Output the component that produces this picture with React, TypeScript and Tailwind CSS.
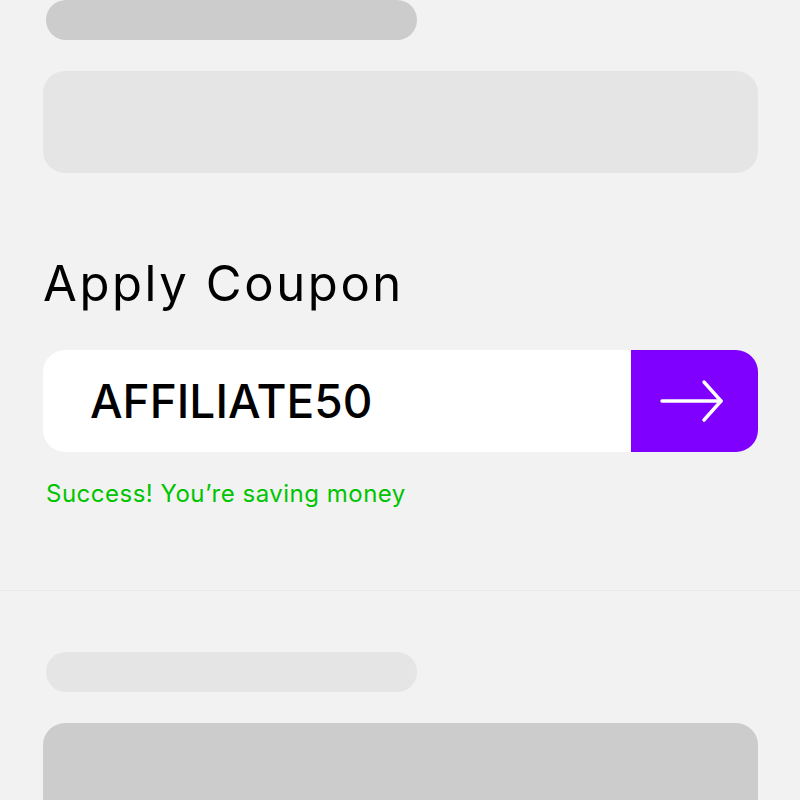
export default function App() {
  return (
    <div className="min-h-screen overflow-hidden bg-[#f2f2f2] font-['Inter',sans-serif]">
      <section className="border-b border-[#e8e8e8] pl-[43px] pr-[42px] pb-[82px]">
        <div className="ml-[3px] h-10 w-[371px] rounded-full bg-[#cccccc]" />
        <div className="mt-[31px] h-[102px] rounded-[22px] bg-[#e5e5e5]" />

        <h2 className="mt-[79px] text-[49px] leading-[64px] font-normal tracking-[2.6px] text-black">
          Apply Coupon
        </h2>

        <div className="mt-[34px] flex h-[102px] overflow-hidden rounded-[22px] bg-white">
          <div className="flex flex-1 items-center pl-[47px] text-[46px] font-medium text-black">
            AFFILIATE50
          </div>
          <button className="flex w-[127px] items-center justify-center bg-[#7f00ff] pr-[5px] text-white">
            <svg width="64" height="44" viewBox="0 0 64 44" fill="none" stroke="currentColor" strokeWidth="3.4" strokeLinecap="round" strokeLinejoin="round">
              <path d="M2 22H61" />
              <path d="M44 3L61 22L44 41" />
            </svg>
          </button>
        </div>

        <p className="mt-[28px] ml-[3px] text-[24px] leading-[28px] tracking-[0.5px] text-[#00c400]">
          Success! You’re saving money
        </p>
      </section>

      <section className="pl-[43px] pr-[42px] pt-[61px]">
        <div className="ml-[3px] h-10 w-[371px] rounded-full bg-[#e5e5e5]" />
        <div className="mt-[31px] h-[102px] rounded-[22px] bg-[#cccccc]" />
      </section>
    </div>
  )
}
